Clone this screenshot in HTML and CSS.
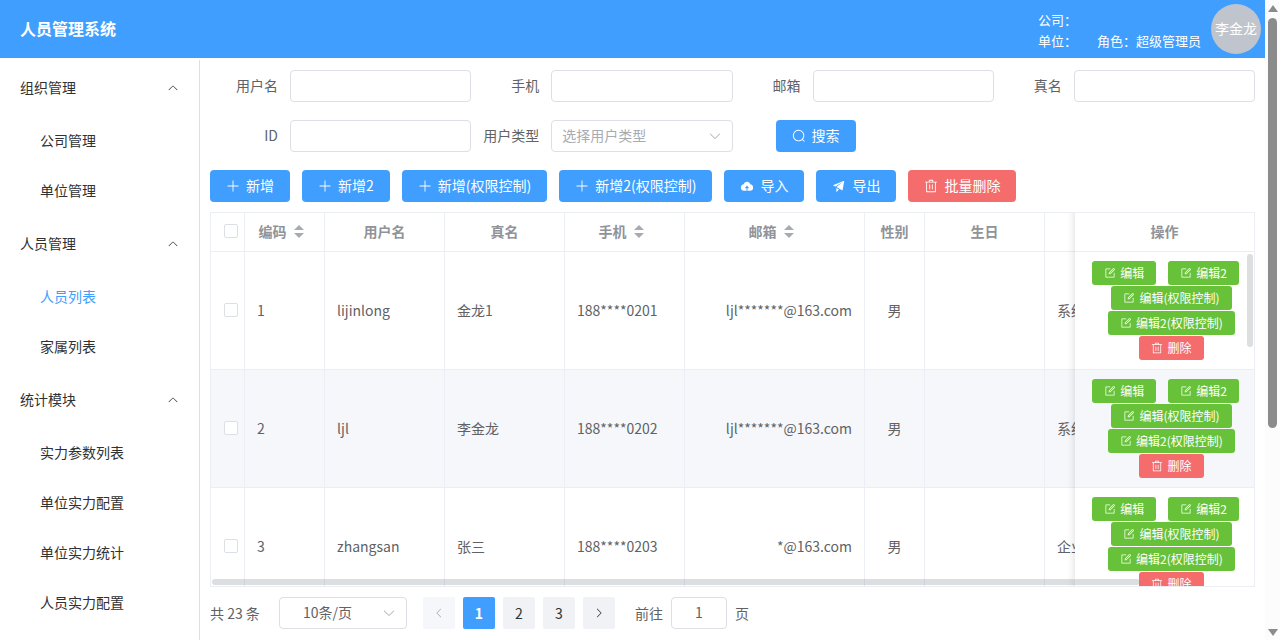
FILE: index.html
```html
<!DOCTYPE html>
<html lang="zh-CN">
<head>
<meta charset="utf-8">
<title>人员管理系统</title>
<link rel="stylesheet" href="styles.css">
</head>
<body>
<svg class="sprite" aria-hidden="true">
  <symbol id="down" viewBox="0 0 1024 1024"><path d="M831.872 340.864 512 652.672 192.128 340.864a30.592 30.592 0 0 0-42.752 0 29.12 29.12 0 0 0 0 41.6L489.664 714.24a32 32 0 0 0 44.672 0l340.288-331.712a29.12 29.12 0 0 0 0-41.728 30.592 30.592 0 0 0-42.752 0z"/></symbol>
  <symbol id="plus" viewBox="0 0 1024 1024"><path d="M480 480V128a32 32 0 0 1 64 0v352h352a32 32 0 1 1 0 64H544v352a32 32 0 1 1-64 0V544H128a32 32 0 0 1 0-64z"/></symbol>
  <symbol id="search" viewBox="0 0 1024 1024"><path d="m795.904 750.72 124.992 124.928a32 32 0 0 1-45.248 45.248L750.656 795.904a416 416 0 1 1 45.248-45.248zM480 832a352 352 0 1 0 0-704 352 352 0 0 0 0 704"/></symbol>
  <symbol id="trash" viewBox="0 0 1024 1024"><path d="M160 256H96a32 32 0 0 1 0-64h256V95.936a32 32 0 0 1 32-32h256a32 32 0 0 1 32 32V192h256a32 32 0 1 1 0 64h-64v672a32 32 0 0 1-32 32H192a32 32 0 0 1-32-32zm448-64v-64H416v64zM224 896h576V256H224zm192-128a32 32 0 0 1-32-32V416a32 32 0 0 1 64 0v320a32 32 0 0 1-32 32m192 0a32 32 0 0 1-32-32V416a32 32 0 0 1 64 0v320a32 32 0 0 1-32 32"/></symbol>
  <symbol id="edit" viewBox="0 0 1024 1024"><path d="M832 512a32 32 0 1 1 64 0v352a32 32 0 0 1-32 32H160a32 32 0 0 1-32-32V160a32 32 0 0 1 32-32h352a32 32 0 0 1 0 64H192v640h640z"/><path d="m469.952 554.24 52.8-7.552L847.104 222.4a32 32 0 1 0-45.248-45.248L477.44 501.44l-7.552 52.8zm422.4-422.4a96 96 0 0 1 0 135.808l-331.84 331.84a32 32 0 0 1-18.112 9.088L436.8 623.68a32 32 0 0 1-36.224-36.224l15.104-105.6a32 32 0 0 1 9.024-18.112l331.904-331.84a96 96 0 0 1 135.744 0z"/></symbol>
  <symbol id="upload" viewBox="0 0 1024 1024"><path d="M544 864V672h128L512 480 352 672h128v192H320v-1.6c-5.376.32-10.496 1.6-16 1.6A240 240 0 0 1 64 624c0-123.136 93.12-223.488 212.608-237.248A239.808 239.808 0 0 1 512 192a239.872 239.872 0 0 1 235.456 194.752c119.488 13.76 212.48 114.112 212.48 237.248a240 240 0 0 1-240 240c-5.376 0-10.56-1.28-16-1.6v1.6z"/></symbol>
  <symbol id="send" viewBox="0 0 1024 1024"><path d="m64 448 832-320-128 704-446.08-243.328L832 192 242.816 545.472zm256 512V657.024L512 768z"/></symbol>
</svg>

<div class="window">
  <div class="app">
    <header class="header">
      <h1 class="title">人员管理系统</h1>
      <div class="info">
        <div class="info-line"><span>公司：</span></div>
        <div class="info-line"><span>单位：</span><span>角色：超级管理员</span></div>
      </div>
      <div class="avatar">李金龙</div>
    </header>
    <div class="body">
      <nav class="sidebar">
        <button class="menu-group" type="button">组织管理<svg class="icon up"><use href="#down"/></svg></button>
        <a class="menu-item" href="#">公司管理</a>
        <a class="menu-item" href="#">单位管理</a>
        <button class="menu-group" type="button">人员管理<svg class="icon up"><use href="#down"/></svg></button>
        <a class="menu-item active" href="#">人员列表</a>
        <a class="menu-item" href="#">家属列表</a>
        <button class="menu-group" type="button">统计模块<svg class="icon up"><use href="#down"/></svg></button>
        <a class="menu-item" href="#">实力参数列表</a>
        <a class="menu-item" href="#">单位实力配置</a>
        <a class="menu-item" href="#">单位实力统计</a>
        <a class="menu-item" href="#">人员实力配置</a>
      </nav>
      <main class="main">
        <form class="filters">
          <div class="field"><label for="f-user">用户名</label><input class="input" id="f-user" type="text"></div>
          <div class="field"><label for="f-phone">手机</label><input class="input" id="f-phone" type="text"></div>
          <div class="field"><label for="f-mail">邮箱</label><input class="input" id="f-mail" type="text"></div>
          <div class="field"><label for="f-name">真名</label><input class="input" id="f-name" type="text"></div>
          <div class="field"><label for="f-id">ID</label><input class="input" id="f-id" type="text"></div>
          <div class="field"><label for="f-type">用户类型</label>
            <div class="select"><select class="input placeholder" id="f-type"><option>选择用户类型</option></select><svg class="icon"><use href="#down"/></svg></div>
          </div>
          <div class="submit"><button class="btn" type="button"><svg class="icon"><use href="#search"/></svg><span>搜索</span></button></div>
        </form>
        <div class="toolbar">
          <button class="btn" type="button"><svg class="icon"><use href="#plus"/></svg><span>新增</span></button>
          <button class="btn" type="button"><svg class="icon"><use href="#plus"/></svg><span>新增2</span></button>
          <button class="btn" type="button"><svg class="icon"><use href="#plus"/></svg><span>新增(权限控制)</span></button>
          <button class="btn" type="button"><svg class="icon"><use href="#plus"/></svg><span>新增2(权限控制)</span></button>
          <button class="btn" type="button"><svg class="icon"><use href="#upload"/></svg><span>导入</span></button>
          <button class="btn" type="button"><svg class="icon"><use href="#send"/></svg><span>导出</span></button>
          <button class="btn danger" type="button"><svg class="icon"><use href="#trash"/></svg><span>批量删除</span></button>
        </div>
        <div class="table-box">
          <div class="table-scroll">
            <table class="table">
              <colgroup><col class="w-check"><col class="w-code"><col class="w-text"><col class="w-text"><col class="w-text"><col class="w-mail"><col class="w-sex"><col class="w-text"><col class="w-type"><col class="w-actions"></colgroup>
              <thead>
                <tr>
                  <th><input class="check" type="checkbox" aria-label="全选"></th>
                  <th><span class="sortable">编码<span class="carets"></span></span></th>
                  <th>用户名</th>
                  <th>真名</th>
                  <th><span class="sortable">手机<span class="carets"></span></span></th>
                  <th><span class="sortable">邮箱<span class="carets"></span></span></th>
                  <th>性别</th>
                  <th>生日</th>
                  <th></th>
                  <th class="fixed">操作</th>
                </tr>
              </thead>
              <tbody>
                <tr>
                  <td><input class="check" type="checkbox" aria-label="选择 1"></td>
                  <td>1</td><td>lijinlong</td><td>金龙1</td><td>188****0201</td><td class="right">ljl*******@163.com</td><td class="center">男</td><td></td><td>系统</td>
                  <td class="fixed"><div class="actions">
                    <button class="btn small success" type="button"><svg class="icon"><use href="#edit"/></svg>编辑</button>
                    <button class="btn small success" type="button"><svg class="icon"><use href="#edit"/></svg>编辑2</button>
                    <button class="btn small success" type="button"><svg class="icon"><use href="#edit"/></svg>编辑(权限控制)</button>
                    <button class="btn small success" type="button"><svg class="icon"><use href="#edit"/></svg>编辑2(权限控制)</button>
                    <button class="btn small danger" type="button"><svg class="icon"><use href="#trash"/></svg>删除</button>
                  </div></td>
                </tr>
                <tr class="current">
                  <td><input class="check" type="checkbox" aria-label="选择 2"></td>
                  <td>2</td><td>ljl</td><td>李金龙</td><td>188****0202</td><td class="right">ljl*******@163.com</td><td class="center">男</td><td></td><td>系统</td>
                  <td class="fixed"><div class="actions">
                    <button class="btn small success" type="button"><svg class="icon"><use href="#edit"/></svg>编辑</button>
                    <button class="btn small success" type="button"><svg class="icon"><use href="#edit"/></svg>编辑2</button>
                    <button class="btn small success" type="button"><svg class="icon"><use href="#edit"/></svg>编辑(权限控制)</button>
                    <button class="btn small success" type="button"><svg class="icon"><use href="#edit"/></svg>编辑2(权限控制)</button>
                    <button class="btn small danger" type="button"><svg class="icon"><use href="#trash"/></svg>删除</button>
                  </div></td>
                </tr>
                <tr>
                  <td><input class="check" type="checkbox" aria-label="选择 3"></td>
                  <td>3</td><td>zhangsan</td><td>张三</td><td>188****0203</td><td class="right">*@163.com</td><td class="center">男</td><td></td><td>企业</td>
                  <td class="fixed"><div class="actions">
                    <button class="btn small success" type="button"><svg class="icon"><use href="#edit"/></svg>编辑</button>
                    <button class="btn small success" type="button"><svg class="icon"><use href="#edit"/></svg>编辑2</button>
                    <button class="btn small success" type="button"><svg class="icon"><use href="#edit"/></svg>编辑(权限控制)</button>
                    <button class="btn small success" type="button"><svg class="icon"><use href="#edit"/></svg>编辑2(权限控制)</button>
                    <button class="btn small danger" type="button"><svg class="icon"><use href="#trash"/></svg>删除</button>
                  </div></td>
                </tr>
              </tbody>
            </table>
          </div>
          <div class="bar-y"></div>
          <div class="bar-x"></div>
        </div>
        <div class="pagination">
          <span class="total">共 23 条</span>
          <div class="select size"><select class="input" aria-label="每页条数"><option>10条/页</option></select><svg class="icon"><use href="#down"/></svg></div>
          <div class="pager">
            <button class="page" type="button" disabled aria-label="上一页"><svg class="icon prev"><use href="#down"/></svg></button>
            <button class="page on" type="button">1</button>
            <button class="page" type="button">2</button>
            <button class="page" type="button">3</button>
            <button class="page" type="button" aria-label="下一页"><svg class="icon next"><use href="#down"/></svg></button>
          </div>
          <div class="jump"><label for="goto">前往</label><input class="input" id="goto" type="text" value="1"><span>页</span></div>
        </div>
      </main>
    </div>
  </div>
  <div class="scrollbar"><span class="arrow top"></span><span class="thumb"></span><span class="arrow bottom"></span></div>
</div>
</body>
</html>
```
FILE: styles.css
```css
* { box-sizing: border-box; }
body {
  margin: 0;
  font: 14px/20px "Noto Sans CJK SC", sans-serif;
  color: #606266;
  background: #fff;
}
button, input, select { font: inherit; color: inherit; }
button { cursor: pointer; }
.sprite { display: none; }
.icon { width: 1em; height: 1em; fill: currentColor; flex: none; }
.window { display: flex; height: 100vh; overflow: hidden; }
.app { flex: 1; min-width: 0; display: flex; flex-direction: column; }

.header {
  flex: none;
  display: flex;
  align-items: center;
  height: 58px;
  padding: 0 4px 0 20px;
  background: #409eff;
  color: #fff;
}
.title { flex: 1; margin: 0; padding-bottom: 2px; font-size: 16px; line-height: 24px; font-weight: 700; }
.info { font-size: 13px; line-height: 21px; padding-top: 2px; }
.info-line { display: flex; gap: 20px; }
.avatar {
  width: 50px;
  height: 50px;
  margin-left: 10px;
  border-radius: 50%;
  background: #c0c4cc;
  line-height: 48px;
  text-align: center;
  white-space: nowrap;
}

.body { flex: 1; min-height: 0; display: flex; }
.sidebar {
  flex: none;
  width: 200px;
  margin-top: 2px;
  border-right: 1px solid #dcdfe6;
  overflow: hidden;
}
.menu-group {
  display: flex;
  align-items: center;
  justify-content: space-between;
  width: 100%;
  height: 56px;
  padding: 0 20px 2px;
  border: 0;
  background: none;
  color: #303133;
}
.menu-group .icon { margin-top: 2px; font-size: 12px; }
.up { transform: rotate(180deg); }
.menu-item {
  display: block;
  padding: 0 0 2px 40px;
  line-height: 48px;
  color: #303133;
  text-decoration: none;
}
.menu-item.active { color: #409eff; }

.main {
  flex: 1;
  min-width: 0;
  display: flex;
  flex-direction: column;
  padding: 12px 10px 11px;
}
.filters { display: grid; grid-template-columns: repeat(4, 1fr); row-gap: 18px; }
.field { display: flex; align-items: center; min-width: 0; }
.field label { flex: none; width: 80px; padding: 0 12px 2px 0; text-align: right; }
.input {
  flex: 1;
  width: 100%;
  min-width: 0;
  height: 32px;
  padding: 0 10px 2px;
  border: 1px solid #dcdfe6;
  border-radius: 4px;
  background: #fff;
  outline: 0;
  appearance: none;
}
.select { position: relative; flex: 1; display: flex; min-width: 0; }
.select .icon {
  position: absolute;
  right: 11px;
  top: 9px;
  color: #a8abb2;
  pointer-events: none;
}
.placeholder { color: #a8abb2; }
.submit { padding-left: 43px; }

.btn {
  display: inline-flex;
  align-items: center;
  justify-content: center;
  gap: 6px;
  height: 32px;
  padding: 0 16px;
  border: 0;
  border-radius: 4px;
  background: #409eff;
  color: #fff;
  white-space: nowrap;
}
.btn span { padding-bottom: 2px; }
.success { background: #67c23a; }
.danger { background: #f56c6c; }
.small { height: 24px; padding: 0 12px; gap: 4px; font-size: 12px; border-radius: 3px; }
.toolbar { display: flex; gap: 12px; margin: 18px 0 10px; }

.table-box {
  position: relative;
  flex: 1;
  min-height: 0;
  border: 1px solid #ebeef5;
}
.table-scroll { height: 100%; overflow: auto; scrollbar-width: none; }
.table { width: 1173px; table-layout: fixed; border-collapse: separate; border-spacing: 0; }
.w-check { width: 34px; }
.w-code { width: 80px; }
.w-text { width: 120px; }
.w-mail { width: 180px; }
.w-sex { width: 60px; }
.w-type { width: 160px; }
.w-actions { width: 179px; }
.table th, .table td {
  padding: 0 12px 2px;
  border-right: 1px solid #ebeef5;
  border-bottom: 1px solid #ebeef5;
  background: #fff;
  text-align: left;
  white-space: nowrap;
}
.table th { height: 39px; color: #909399; font-weight: 700; text-align: center; position: sticky; top: 0; z-index: 2; }
.table td { height: 118px; }
.table .current td { background: #f5f7fa; }
.table th:first-child, .table td:first-child { padding: 0 6px 2px 13px; line-height: 14px; text-align: left; }
.table .center { text-align: center; }
.table .right { text-align: right; }
.table .fixed { position: sticky; right: 0; z-index: 1; border-right: 0; text-align: center; }
.table td.fixed { padding: 0 10px 0 12px; }
.table th.fixed { z-index: 3; }
.table th:nth-child(7) { padding: 0 0 2px; }
.fixed::before {
  content: "";
  position: absolute;
  left: -10px;
  top: 0;
  bottom: -1px;
  width: 10px;
  box-shadow: inset -10px 0 10px -10px rgba(0, 0, 0, .15);
}
.check {
  display: block;
  width: 14px;
  height: 14px;
  margin: 0;
  border: 1px solid #dcdfe6;
  border-radius: 2px;
  background: #fff;
  appearance: none;
}
.sortable { display: inline-flex; align-items: center; }
.carets { display: flex; flex-direction: column; align-items: center; gap: 3px; width: 24px; }
.carets::before, .carets::after { content: ""; border: 5px solid transparent; }
.carets::before { border-top: 0; border-bottom-color: #a8abb2; }
.carets::after { border-bottom: 0; border-top-color: #a8abb2; }
.actions { display: flex; flex-wrap: wrap; justify-content: center; row-gap: 1px; }
.actions .btn + .btn { margin-left: 12px; }
.bar-y, .bar-x { position: absolute; z-index: 4; border-radius: 4px; background: rgba(144, 147, 153, .3); }
.bar-y { right: 1px; top: 41px; width: 6px; height: 28%; max-height: 93px; }
.bar-x { left: 1px; bottom: 1px; height: 6px; width: 89%; }

.pagination { display: flex; align-items: center; gap: 16px; margin-top: 10px; }
.total { min-width: 53px; }
.size { flex: none; width: 128px; }
.size .input { padding-left: 23px; }
.pager { display: flex; gap: 8px; }
.page {
  display: flex;
  align-items: center;
  justify-content: center;
  width: 32px;
  height: 32px;
  padding: 0 0 1px;
  border: 0;
  border-radius: 2px;
  background: #f0f2f5;
  color: #303133;
}
.page:disabled { background: #f5f7fa; color: #a8abb2; }
.page .icon { font-size: 12px; }
.page.on { background: #409eff; color: #fff; font-weight: 700; }
.prev { transform: rotate(90deg); }
.next { transform: rotate(-90deg); }
.jump { display: flex; align-items: center; gap: 8px; padding-left: 4px; }
.jump .input { flex: none; width: 56px; text-align: center; }

.scrollbar {
  flex: none;
  display: flex;
  flex-direction: column;
  align-items: center;
  width: 15px;
  padding: 5px 0 4px;
  background: #fcfcfc;
}
.arrow { border: 5px solid transparent; }
.arrow.top { border-top: 0; border-bottom: 7px solid #8b8b8b; }
.arrow.bottom { border-bottom: 0; border-top: 7px solid #8b8b8b; margin-top: auto; }
.thumb { width: 9px; height: 65%; margin-top: 6px; border-radius: 5px; background: #8b8b8b; }
```
